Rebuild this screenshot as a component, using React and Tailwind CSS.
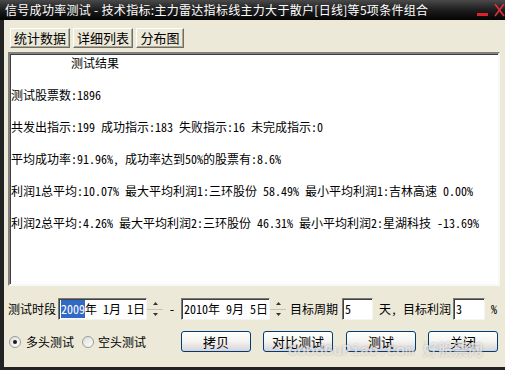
import React from 'react';

const mono = "font-['Noto_Sans_Mono_CJK_SC','Noto_Sans_CJK_SC',monospace]";

const Spinner = () => (
  <div className="w-[16px] h-[22px] flex flex-col bg-[#ece9d8]">
    <div className="flex-1 flex items-center justify-center border-b border-[#c8c4b4]">
      <svg width="5" height="3" viewBox="0 0 5 3"><path d="M0 3 L2.5 0 L5 3 Z" fill="#333" /></svg>
    </div>
    <div className="flex-1 flex items-center justify-center">
      <svg width="5" height="3" viewBox="0 0 5 3"><path d="M0 0 L2.5 3 L5 0 Z" fill="#333" /></svg>
    </div>
  </div>
);

const Tab = ({ label, w, ml }) => (
  <div
    className={`${w} ${ml} h-[20px] flex items-center justify-center text-[13px] bg-[#ece9d8] border border-t-white border-l-white border-b-[#716f64] border-r-[#716f64] shadow-[inset_-1px_-1px_0_#aca899]`}
  >
    {label}
  </div>
);

const Button = ({ label, ml }) => (
  <div
    className={`${ml} w-[70px] h-[21px] flex items-center justify-center text-[13px] text-black rounded-[3px] border border-[#003c74] bg-gradient-to-b from-white via-[#f3f3ef] to-[#d6d3d8]`}
  >
    {label}
  </div>
);

const Radio = ({ checked }) => (
  <div className="w-[12px] h-[12px] rounded-full border border-[#9a9a9a] bg-gradient-to-br from-[#dcdcd6] to-white flex items-center justify-center">
    {checked && <div className="w-[4px] h-[4px] rounded-full bg-[#1a1a1a]" />}
  </div>
);

const Field = ({ children, w }) => (
  <div
    className={`${w} h-[22px] bg-white flex items-center pl-[2px] text-[12px] border border-t-[#7a7a7a] border-l-[#7a7a7a] border-b-[#f4f4f4] border-r-[#f4f4f4] shadow-[inset_1px_1px_0_#404040]`}
  >
    {children}
  </div>
);

const lines = [
  '          测试结果',
  '',
  '测试股票数:1896',
  '',
  '共发出指示:199 成功指示:183 失败指示:16 未完成指示:0',
  '',
  '平均成功率:91.96%, 成功率达到50%的股票有:8.6%',
  '',
  '利润1总平均:10.07% 最大平均利润1:三环股份 58.49% 最小平均利润1:吉林高速 0.00%',
  '',
  '利润2总平均:4.26% 最大平均利润2:三环股份 46.31% 最小平均利润2:星湖科技 -13.69%',
];

export default function App() {
  return (
    <div className="w-[505px] h-[370px] bg-[#222] flex flex-col overflow-hidden relative">
      {/* title bar */}
      <div className="h-[20px] flex items-center bg-gradient-to-b from-[#4a4a4a] via-[#1e1e1e] to-[#050505] pl-[5px]">
        <span className="text-white text-[12px] tracking-[0.3px] font-['Noto_Sans_CJK_SC',sans-serif] whitespace-pre">
          信号成功率测试 - 技术指标:主力雷达指标线主力大于散户[日线]等5项条件组合
        </span>
        <div className="absolute left-[477px] top-[13px] w-[11px] h-[3px] bg-[#d8242c]" />
        <svg className="absolute left-[494px] top-[3px]" width="11" height="14" viewBox="0 0 11 14">
          <path d="M1 1 L10 13 M10 1 L1 13" stroke="#e0303a" strokeWidth="1.6" />
        </svg>
      </div>

      {/* body */}
      <div className="flex-1 ml-[4px] mb-[3px] bg-[#ece9d8] flex flex-col text-black">
        <div className="flex mt-[8px] font-['Noto_Sans_CJK_SC',sans-serif]">
          <Tab label="统计数据" w="w-[60px]" ml="ml-[6px]" />
          <Tab label="详细列表" w="w-[60px]" ml="ml-[3px]" />
          <Tab label="分布图" w="w-[48px]" ml="ml-[3px]" />
        </div>

        <div
          className={`${mono} ml-[4px] mt-[4px] w-[492px] h-[234px] bg-white border-2 border-t-[#808080] border-l-[#808080] border-b-[#f8f8f8] border-r-[#f8f8f8] shadow-[inset_1px_1px_0_#404040] pl-[1px] pt-[1px] text-[12px] leading-[16px]`}
        >
          {lines.map((l, i) => (
            <div key={i} className="h-[16px] whitespace-pre">
              {l}
            </div>
          ))}
        </div>

        <div className={`${mono} flex items-center mt-[12px] h-[22px] text-[12px]`}>
          <span className="ml-[4px] w-[48px]">测试时段</span>
          <div className="ml-[2px]">
            <Field w="w-[89px]">
              <span className="bg-[#316ac5] text-white">2009</span>
              <span className="whitespace-pre">年 1月 1日</span>
            </Field>
          </div>
          <Spinner />
          <span className="ml-[6px] w-[6px]">-</span>
          <div className="ml-[6px]">
            <Field w="w-[89px]">
              <span className="whitespace-pre">2010年 9月 5日</span>
            </Field>
          </div>
          <Spinner />
          <span className="ml-[4px] w-[48px]">目标周期</span>
          <div className="ml-[4px]">
            <Field w="w-[31px]">5</Field>
          </div>
          <span className="ml-[6px] whitespace-pre">天, 目标利润</span>
          <div className="ml-[2px]">
            <Field w="w-[32px]">3</Field>
          </div>
          <span className="ml-[6px]">%</span>
        </div>

        <div className={`${mono} flex items-center mt-[11px] h-[21px] text-[12px]`}>
          <div className="ml-[5px]">
            <Radio checked />
          </div>
          <span className="ml-[5px]">多头测试</span>
          <div className="ml-[8px]">
            <Radio />
          </div>
          <span className="ml-[4px]">空头测试</span>
          <div className="flex font-['Noto_Sans_CJK_SC',sans-serif]">
            <Button label="拷贝" ml="ml-[35px]" />
            <Button label="对比测试" ml="ml-[12px]" />
            <Button label="测试" ml="ml-[13px]" />
            <Button label="关闭" ml="ml-[12px]" />
          </div>
        </div>
      </div>

      {/* watermark */}
      <div className="absolute left-[288px] top-[343px] text-[15px] leading-[18px] text-white/60 font-['Liberation_Mono','Noto_Sans_CJK_SC',monospace] font-bold whitespace-pre [text-shadow:0_0_2px_rgba(120,120,120,0.5)]">
        GoodGuPiao.Com 好股票网
      </div>
    </div>
  );
}
